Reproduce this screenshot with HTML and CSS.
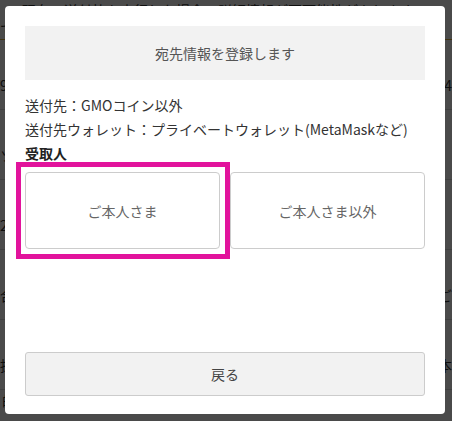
FILE: index.html
```html
<!DOCTYPE html>
<html lang="ja">
<head>
    <meta charset="UTF-8">
    <meta name="viewport" content="width=device-width, initial-scale=1.0">
    <title>宛先情報の登録</title>
    <link rel="stylesheet" href="styles.css">
</head>
<body>

    <div class="page">
        <p class="notice">※現在の送付枠を実行した場合、詳細情報が不可能性があります。</p>
        <div class="page-row first"><span>で</span></div>
        <div class="page-row"><span>9l</span><span>24</span></div>
        <div class="page-row"><span>ソ</span></div>
        <div class="page-row"><span>24</span></div>
        <div class="page-row"><span>合</span><span>ご</span></div>
        <div class="page-row"><span>揀</span><span>本</span></div>
        <p class="page-foot">的に生成されます</p>
    </div>

    <div class="overlay">
        <div class="modal">
            <div class="modal-title">宛先情報を登録します</div>

            <div class="info">
                <p>送付先：GMOコイン以外</p>
                <p>送付先ウォレット：プライベートウォレット(MetaMaskなど)</p>
                <p class="info-label">受取人</p>
            </div>

            <div class="choices">
                <button type="button" class="choice choice-selected">ご本人さま</button>
                <button type="button" class="choice">ご本人さま以外</button>
            </div>

            <button type="button" class="back-button">戻る</button>
        </div>
    </div>

</body>
</html>
```

FILE: styles.css
```css
* {
    margin: 0;
    padding: 0;
    box-sizing: border-box;
}

body {
    font-family: "Noto Sans CJK JP", "Noto Sans", sans-serif;
    font-size: 14px;
    color: #333;
    background-color: #fff;
    width: 452px;
    height: 421px;
    overflow: hidden;
}

/* page behind the dialog */
.notice {
    line-height: 20px;
    padding-left: 8px;
    white-space: nowrap;
    overflow: hidden;
}

.page-row {
    display: flex;
    justify-content: space-between;
    align-items: flex-end;
    height: 70px;
    line-height: 20px;
    padding-bottom: 14px;
    border-bottom: 1px solid #ddd;
}

.page-row.first {
    height: 20px;
    padding-bottom: 0;
    border-bottom: 1px solid #e0b040;
}

.page-foot {
    line-height: 20px;
    padding-left: 2px;
}

/* dialog */
.overlay {
    position: fixed;
    inset: 0;
    background-color: rgba(0, 0, 0, 0.71);
}

.modal {
    position: absolute;
    left: 5px;
    top: 6px;
    width: 440px;
    height: 408px;
    background-color: #fff;
    border-radius: 4px;
    padding: 20px 20px 18px;
    display: flex;
    flex-direction: column;
}

.modal-title {
    height: 54px;
    background-color: #f2f2f2;
    color: #555;
    display: flex;
    align-items: center;
    justify-content: center;
}

.info {
    margin-top: 13px;
    line-height: 24px;
    color: #333;
}

.info-label {
    font-weight: bold;
    color: #222;
}

.choices {
    margin-top: 7px;
    display: grid;
    grid-template-columns: 1fr 1fr;
    gap: 10px;
}

.choice {
    height: 77px;
    background-color: #fff;
    border: 1px solid #ccc;
    border-radius: 4px;
    font-family: inherit;
    font-size: 14px;
    color: #666;
    cursor: pointer;
}

/* highlight frame drawn over the selected choice */
.choice-selected {
    position: relative;
}

.choice-selected::after {
    content: "";
    position: absolute;
    top: -11px;
    bottom: -11px;
    left: -10px;
    right: -11px;
    border: 5px solid #e2139c;
}

.back-button {
    margin-top: auto;
    height: 44px;
    background-color: #f2f2f2;
    border: 1px solid #ccc;
    border-radius: 3px;
    font-family: inherit;
    font-size: 14px;
    color: #444;
    cursor: pointer;
}
```
